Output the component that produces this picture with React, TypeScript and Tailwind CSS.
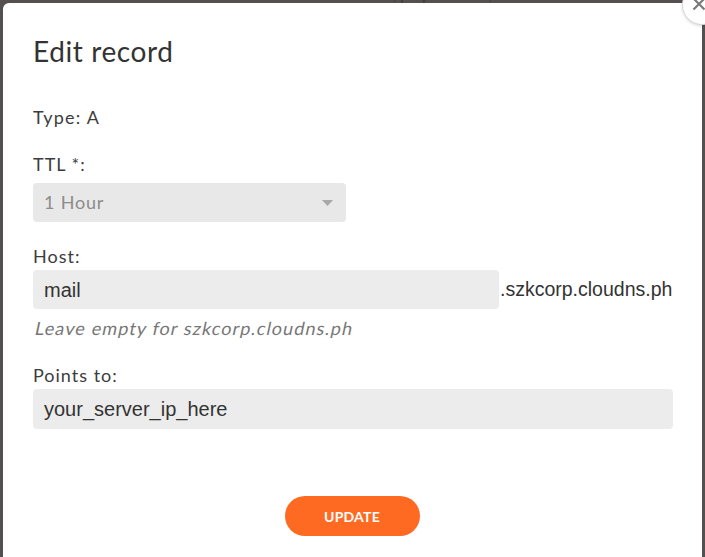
import React from "react";

const lato = { fontFamily: "Lato, 'Open Sans', sans-serif" };
const arial = { fontFamily: "'Liberation Sans', Arial, sans-serif" };

export default function App() {
  return (
    <div className="relative w-[705px] h-[557px] overflow-hidden bg-[#545050]" style={lato}>
      <div className="h-[3px] overflow-hidden flex text-[15px] leading-[18px] text-[#3a3737]">
        <div className="-mt-[15px] flex">
          <span className="ml-[205px]">TXT</span>
          <span className="ml-[80px]">v=DMARC1; p=quarantine; rua</span>
        </div>
      </div>
      <div className="ml-[3px] w-[699px] h-[560px] bg-white rounded-t-[6px] pl-[30px] pt-[31px] flex flex-col">
        <h1 className="text-[28px] leading-[34px] text-[#333] font-normal tracking-[0.6px]">Edit record</h1>
        <div className="mt-[37px] text-[18px] leading-[24px] text-[#3c3c3c] tracking-[1.2px]">Type: A</div>
        <div className="mt-[23px] text-[18px] leading-[24px] text-[#3c3c3c] tracking-[1px]">TTL *:</div>
        <div className="mt-[7px] w-[313px] h-[39px] rounded-[4px] bg-[#e8e8e8] flex items-center justify-between pl-[11px] pr-[13px]">
          <span className="text-[18px] text-[#8c8c8c] tracking-[0.8px]">1 Hour</span>
          <svg width="11" height="6" viewBox="0 0 11 6">
            <path d="M0 0 L11 0 L5.5 6 Z" fill="#a8a8a8" />
          </svg>
        </div>
        <div className="mt-[22px] text-[18px] leading-[24px] text-[#3c3c3c] tracking-[1px]">Host:</div>
        <div className="mt-[2px] flex items-center">
          <div
            className="w-[466px] h-[39px] rounded-[4px] bg-[#ececec] flex items-center pl-[11px] text-[20px] text-[#333]"
            style={arial}
          >
            mail
          </div>
          <span className="ml-[1px] text-[19.5px] text-[#333]" style={arial}>
            .szkcorp.cloudns.ph
          </span>
        </div>
        <div className="mt-[7px] h-[24px] flex">
          <span className="inline-block origin-bottom-left -skew-x-12 text-[18px] leading-[24px] text-[#777] tracking-[1.1px]">
            Leave empty for szkcorp.cloudns.ph
          </span>
        </div>
        <div className="mt-[23px] text-[18px] leading-[24px] text-[#3c3c3c] tracking-[1px]">Points to:</div>
        <div
          className="mt-[2px] w-[640px] h-[40px] rounded-[4px] bg-[#ececec] flex items-center pl-[11px] text-[20px] text-[#333]"
          style={arial}
        >
          your_server_ip_here
        </div>
        <div className="mt-[67px] w-[640px] flex justify-center">
          <button className="ml-[-2px] w-[135px] h-[40px] rounded-full bg-[#ff6a22] text-white text-[14px] font-bold tracking-[0.2px]">
            UPDATE
          </button>
        </div>
      </div>
      <div className="absolute left-[682px] top-[-15px] w-[40px] h-[40px] rounded-full bg-white border border-[#d8d8d8] shadow-[0_1px_3px_rgba(0,0,0,0.15)]">
        <svg className="absolute left-[9px] top-[11px]" width="14" height="14" viewBox="0 0 14 14">
          <path d="M1.5 1.5 L12.5 12.5 M12.5 1.5 L1.5 12.5" stroke="#7a7a7a" strokeWidth="2.2" />
        </svg>
      </div>
    </div>
  );
}
